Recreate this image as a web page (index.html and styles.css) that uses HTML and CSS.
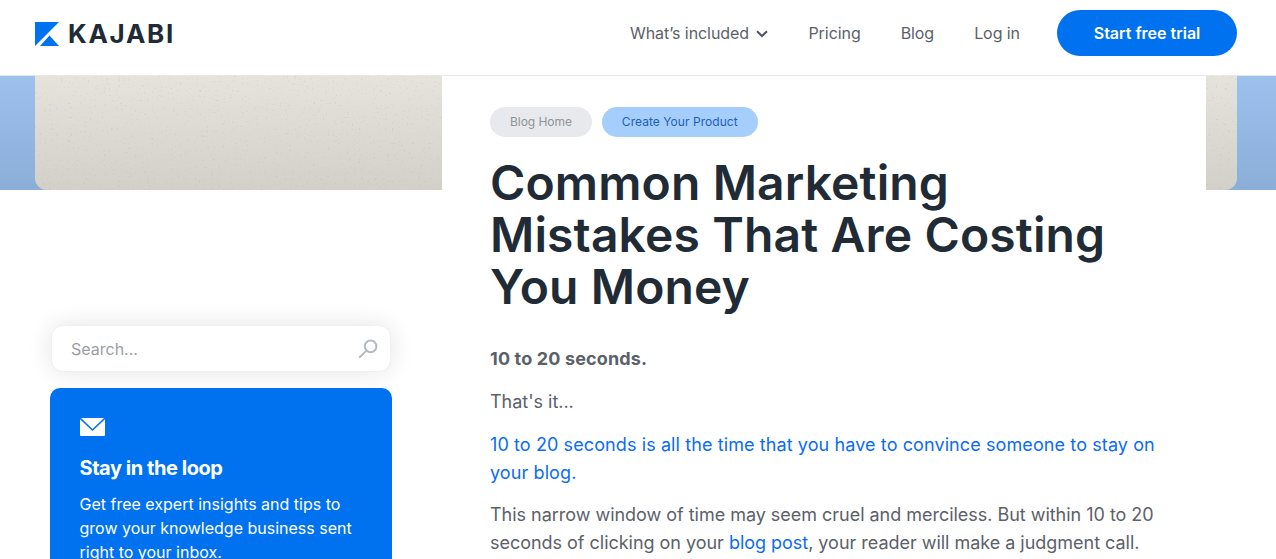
FILE: index.html
```html
<!DOCTYPE html>
<html lang="en">
<head>
    <meta charset="UTF-8">
    <meta name="viewport" content="width=device-width, initial-scale=1.0">
    <title>Common Marketing Mistakes That Are Costing You Money</title>
    <link rel="stylesheet" href="styles.css">
</head>
<body>

    <header class="site-header">
        <a class="logo" href="#">
            <svg class="logo-mark" width="24" height="24" viewBox="0 0 24 24">
                <path d="M0 0H24L0 24Z" fill="#0072ef"/>
                <path d="M14.5 13.5L24 24H5Z" fill="#0072ef"/>
            </svg>
            <span class="logo-text">KAJABI</span>
        </a>
        <nav class="main-nav">
            <a href="#" class="nav-link">What’s included
                <svg class="chevron" width="12" height="8" viewBox="0 0 12 8">
                    <path d="M1 1.2L6 6L11 1.2" fill="none" stroke="#4b5563" stroke-width="2"/>
                </svg>
            </a>
            <a href="#" class="nav-link">Pricing</a>
            <a href="#" class="nav-link">Blog</a>
            <a href="#" class="nav-link">Log in</a>
            <a href="#" class="trial-btn">Start free trial</a>
        </nav>
    </header>

    <div class="hero">
        <div class="hero-image">
            <svg class="hero-grain" width="100%" height="100%">
                <filter id="grain">
                    <feTurbulence type="fractalNoise" baseFrequency="0.42" numOctaves="2" seed="23"/>
                    <feColorMatrix values="0 0 0 0 0.5  0 0 0 0 0.48  0 0 0 0 0.42  0 0 0 9 -6.1"/>
                </filter>
                <rect width="100%" height="100%" filter="url(#grain)"/>
            </svg>
        </div>
    </div>

    <div class="page">
        <aside class="sidebar">
            <div class="search-box">
                <span class="search-text">Search...</span>
                <svg width="20" height="20" viewBox="0 0 20 20">
                    <circle cx="12.6" cy="7.4" r="5.8" fill="none" stroke="#b4bac1" stroke-width="2"/>
                    <path d="M8.4 11.6L1.2 18.8" fill="none" stroke="#b4bac1" stroke-width="2"/>
                </svg>
            </div>
            <div class="signup-card">
                <svg class="mail-icon" width="25" height="18" viewBox="0 0 25 18">
                    <path d="M1 0H24L12.5 11Z" fill="#fff"/>
                    <path d="M0 1.2L12.5 13L25 1.2V17a1 1 0 0 1-1 1H1a1 1 0 0 1-1-1Z" fill="#fff"/>
                </svg>
                <h3>Stay in the loop</h3>
                <p>Get free expert insights and tips to grow your knowledge business sent right to your inbox.</p>
            </div>
        </aside>

        <main class="article">
            <div class="tags">
                <a href="#" class="tag tag-home">Blog Home</a>
                <a href="#" class="tag tag-topic">Create Your Product</a>
            </div>
            <h1>Common Marketing Mistakes That Are Costing You Money</h1>
            <p><strong>10 to 20 seconds.</strong></p>
            <p>That's it...</p>
            <p class="highlight">10 to 20 seconds is all the time that you have to convince someone to stay on your blog.</p>
            <p>This narrow window of time may seem cruel and merciless. But within 10 to 20 seconds of clicking on your <a href="#" class="text-link">blog post</a>, your reader will make a judgment call.</p>
        </main>
    </div>

</body>
</html>
```

FILE: styles.css
```css
* {
    box-sizing: border-box;
}
html, body {
    height: 100%;
    overflow: hidden;
}
body {
    margin: 0;
    background: white;
    font-family: Inter, "Noto Sans", sans-serif;
    color: #5b6169;
}
a {
    text-decoration: none;
}

/* header */
.site-header {
    height: 76px;
    padding: 0 39px 0 35px;
    display: flex;
    justify-content: space-between;
    align-items: center;
    border-bottom: 1px solid #e6e7e9;
    background: white;
}
.logo {
    display: flex;
    align-items: center;
    gap: 9px;
    margin-top: -8px;
}
.logo-text {
    font-size: 26px;
    font-weight: 700;
    letter-spacing: 1.7px;
    line-height: 26px;
    color: #212b36;
}
.main-nav {
    display: flex;
    align-items: center;
    gap: 40px;
    margin-top: -10px;
}
.nav-link {
    font-size: 16px;
    letter-spacing: -0.07px;
    color: #5b6169;
}
.chevron {
    margin-left: 3px;
    vertical-align: 1px;
}
.trial-btn {
    width: 180px;
    height: 46px;
    margin-left: -3px;
    border-radius: 23px;
    display: flex;
    justify-content: center;
    align-items: center;
    background: #0072ef;
    color: white;
    font-size: 16px;
    font-weight: 600;
}

/* hero band */
.hero {
    height: 114px;
    padding: 0 39px 0 35px;
    background: linear-gradient(#9dc1ec, #8aaed8);
}
.hero-image {
    height: 100%;
    border-radius: 0 0 12px 12px;
    overflow: hidden;
    background: linear-gradient(#e6e3dc, #d2d0c8);
}
.hero-grain {
    display: block;
    opacity: 0.3;
}

/* page columns */
.page {
    display: grid;
    grid-template-columns: 442px 764px;
    margin-top: -114px;
}
.sidebar {
    padding: 249px 50px 0;
}
.search-box {
    height: 47px;
    margin: 0 1px 16px;
    padding: 0 12px 0 19px;
    display: flex;
    justify-content: space-between;
    align-items: center;
    background: white;
    border: 1px solid #eef0f1;
    border-radius: 12px;
    box-shadow: 0 0 24px rgba(0, 0, 0, 0.11);
}
.search-text {
    font-size: 16px;
    color: #9a9ea3;
}
.signup-card {
    padding: 30px 29.5px;
    background: #0072ef;
    border-radius: 10px;
    color: white;
}
.mail-icon {
    display: block;
}
.signup-card h3 {
    margin: 20px 0 12px;
    font-size: 20px;
    line-height: 24px;
    font-weight: 700;
    letter-spacing: -0.45px;
}
.signup-card p {
    margin: 0;
    font-size: 16px;
    line-height: 24px;
}

/* article */
.article {
    position: relative;
    background: white;
    padding: 31px 48px 0;
    font-size: 18px;
    line-height: 28px;
}
.tags {
    display: flex;
    gap: 10px;
    margin-bottom: 20px;
}
.tag {
    height: 30px;
    padding: 0 20px;
    border-radius: 15px;
    display: flex;
    align-items: center;
    font-size: 12px;
}
.tag-home {
    background: #e8e9ec;
    color: #8d939a;
    letter-spacing: -0.05px;
}
.tag-topic {
    background: #a5cefc;
    color: #1f5fb4;
    letter-spacing: 0.05px;
}
h1 {
    margin: 0 0 32.3px;
    font-size: 48px;
    line-height: 52px;
    font-weight: 600;
    letter-spacing: 0.13px;
    color: #212b36;
}
.article p {
    margin: 0 0 14.67px;
    letter-spacing: -0.025px;
}
.article strong {
    font-weight: 700;
    letter-spacing: 0.15px;
}
.text-link {
    color: #0a6cf5;
}
.article .highlight {
    color: #0a6cf5;
    letter-spacing: 0.1px;
}
```
